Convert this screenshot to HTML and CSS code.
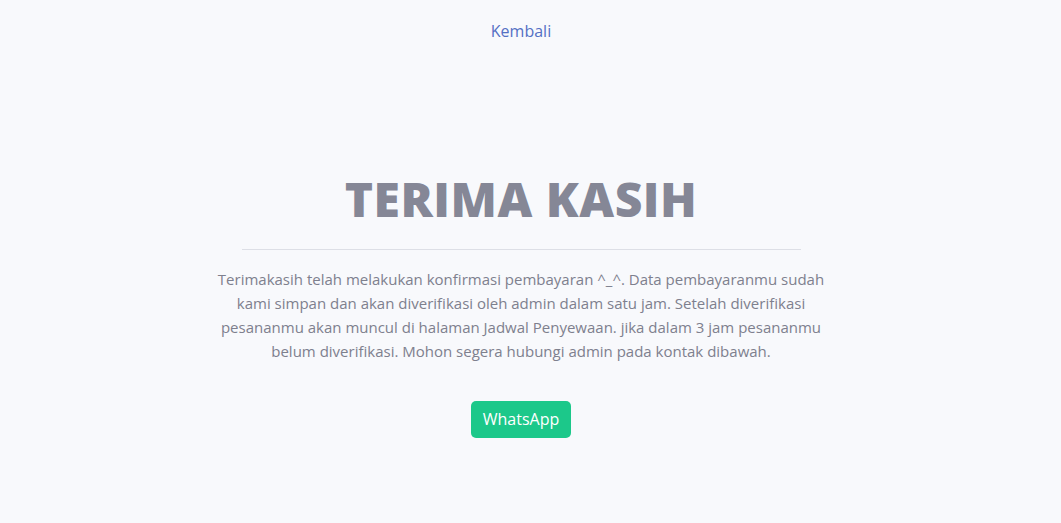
FILE: index.html
```html
<!DOCTYPE html>
<html lang="id">
<head>
<meta charset="utf-8">
<title>Terima Kasih</title>
<link rel="stylesheet" href="styles.css">
</head>
<body>
<div class="page">
  <nav class="topnav"><a class="back-link" href="#">Kembali</a></nav>
  <main class="content">
    <h1 class="title">TERIMA KASIH</h1>
    <hr class="divider">
    <p class="message">Terimakasih telah melakukan konfirmasi pembayaran ^_^. Data pembayaranmu sudah kami simpan dan akan diverifikasi oleh admin dalam satu jam. Setelah diverifikasi pesananmu akan muncul di halaman Jadwal Penyewaan. jika dalam 3 jam pesananmu belum diverifikasi. Mohon segera hubungi admin pada kontak dibawah.</p>
    <a class="btn-wa" href="#">WhatsApp</a>
  </main>
</div>
</body>
</html>
```

FILE: styles.css
```css
* { box-sizing: border-box; }
html, body { margin: 0; padding: 0; }
body {
  background: #f8f9fc;
  font-family: "Open Sans", "Noto Sans", sans-serif;
  color: #858796;
  height: 523px;
  overflow: hidden;
}
.page {
  padding-right: 19px;
  display: flex;
  flex-direction: column;
  align-items: center;
}
.topnav {
  padding-top: 19px;
  height: 41px;
}
.back-link {
  color: #5470c4;
  text-decoration: none;
  font-size: 16px;
  line-height: 24px;
}
.content {
  display: flex;
  flex-direction: column;
  align-items: center;
  padding-top: 128px;
}
.title {
  margin: 0;
  font-size: 48px;
  line-height: 60px;
  font-weight: 800;
  color: #858796;
  letter-spacing: 0.5px;
}
.divider {
  width: 559px;
  border: 0;
  border-top: 1px solid #dddfe6;
  margin: 20px 0 17px;
}
.message {
  width: 620px;
  margin: 0;
  text-align: center;
  font-size: 15px;
  line-height: 24px;
  color: #7e808e;
}
.btn-wa {
  margin-top: 38px;
  background: #1cc88a;
  color: #fff;
  text-decoration: none;
  font-size: 16px;
  line-height: 24px;
  padding: 6px 12px 7px;
  border-radius: 5px;
}
```
